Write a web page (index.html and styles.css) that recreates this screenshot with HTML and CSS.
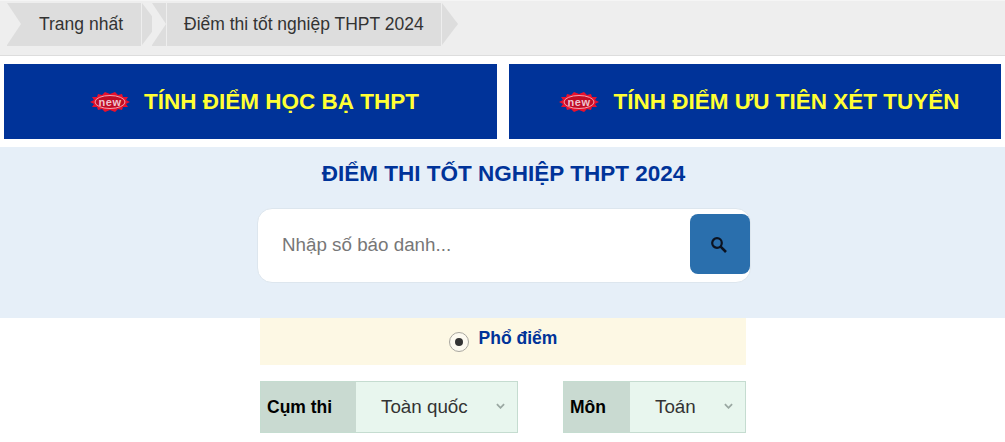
FILE: index.html
```html
<!DOCTYPE html>
<html lang="vi">
<head>
    <meta charset="UTF-8">
    <meta name="viewport" content="width=device-width, initial-scale=1.0">
    <title>Điểm thi tốt nghiệp THPT 2024</title>
    <link rel="stylesheet" href="styles.css">
</head>
<body>
    <div class="breadcrumb">
        <a href="#" class="crumb crumb-first">Trang nhất</a>
        <a href="#" class="crumb crumb-second">Điểm thi tốt nghiệp THPT 2024</a>
    </div>

    <div class="banners">
        <a href="#" class="banner">
            <svg class="new-icon" viewBox="0 0 40 20" width="40" height="20">
                <polygon fill="#e8102c" points="0,10 4,8 2,5 7,5 8,2 12,3 15,0 20,2 25,0 28,3 32,2 33,5 38,5 36,8 40,10 36,12 38,15 33,15 32,18 28,17 25,20 20,18 15,20 12,17 8,18 7,15 2,15 4,12"/>
                <ellipse cx="20" cy="10" rx="15" ry="6.5" fill="#c00c24" stroke="#f3a3b0" stroke-width="1"/>
                <text x="20" y="13.5" class="new-text">new</text>
            </svg>
            <span>TÍNH ĐIỂM HỌC BẠ THPT</span>
        </a>
        <a href="#" class="banner banner-second">
            <svg class="new-icon" viewBox="0 0 40 20" width="40" height="20">
                <polygon fill="#e8102c" points="0,10 4,8 2,5 7,5 8,2 12,3 15,0 20,2 25,0 28,3 32,2 33,5 38,5 36,8 40,10 36,12 38,15 33,15 32,18 28,17 25,20 20,18 15,20 12,17 8,18 7,15 2,15 4,12"/>
                <ellipse cx="20" cy="10" rx="15" ry="6.5" fill="#c00c24" stroke="#f3a3b0" stroke-width="1"/>
                <text x="20" y="13.5" class="new-text">new</text>
            </svg>
            <span>TÍNH ĐIỂM ƯU TIÊN XÉT TUYỂN</span>
        </a>
    </div>

    <div class="hero">
        <h1>ĐIỂM THI TỐT NGHIỆP THPT 2024</h1>
        <div class="search-box">
            <input type="text" class="search-input" placeholder="Nhập số báo danh...">
            <button class="search-btn" type="button">
                <svg viewBox="0 0 18 18" width="18" height="18">
                    <circle cx="7" cy="7" r="4.8" fill="none" stroke="#0b1220" stroke-width="2.2"/>
                    <path d="M10.6 10.6 L16 16" stroke="#0b1220" stroke-width="2.6"/>
                </svg>
            </button>
        </div>
    </div>

    <div class="content">
        <div class="radio-panel">
            <span class="radio"><span class="radio-dot"></span></span>
            <label class="radio-label">Phổ điểm</label>
        </div>
        <div class="filters">
            <div class="filter filter-cum">
                <div class="filter-label">Cụm thi</div>
                <div class="filter-value">
                    <span>Toàn quốc</span>
                    <svg class="caret" viewBox="0 0 10 6" width="9" height="6"><path d="M1 1 L5 5 L9 1" fill="none" stroke="#9aa8a2" stroke-width="2"/></svg>
                </div>
            </div>
            <div class="filter filter-mon">
                <div class="filter-label">Môn</div>
                <div class="filter-value">
                    <span>Toán</span>
                    <svg class="caret" viewBox="0 0 10 6" width="9" height="6"><path d="M1 1 L5 5 L9 1" fill="none" stroke="#9aa8a2" stroke-width="2"/></svg>
                </div>
            </div>
        </div>
    </div>
</body>
</html>
```

FILE: styles.css
```css
* {
    box-sizing: border-box;
    margin: 0;
    padding: 0;
}
html, body {
    height: 442px;
    overflow: hidden;
}
body {
    font-family: "Liberation Sans", Arial, sans-serif;
    background-color: #fff;
    color: #333;
}
.breadcrumb {
    display: flex;
    height: 56px;
    padding: 2px 0 0 7px;
    background-color: #eee;
    border-top: 1px solid #f5f5f5;
    border-bottom: 1px solid #ddd;
}
.crumb {
    position: relative;
    display: block;
    height: 43px;
    line-height: 42px;
    background-color: #ddd;
    color: #333;
    font-size: 17.5px;
    text-decoration: none;
}
.crumb-first {
    width: 134px;
    padding-left: 32px;
}
.crumb-second {
    width: 289px;
    margin-left: 11px;
    padding-left: 32px;
    background: linear-gradient(#eee, #eee) 14px 0 / 1px 100% no-repeat, #ddd;
}
/* notch on the left of each crumb */
.crumb::before {
    content: "";
    position: absolute;
    left: 0;
    top: 0;
    border-style: solid;
    border-width: 21.5px 0 21.5px 14px;
    border-color: transparent transparent transparent #eee;
}
/* arrow head, with a thin light line before it */
.crumb::after {
    content: "";
    position: absolute;
    left: 100%;
    top: 0;
    border-style: solid;
    border-width: 21.5px 0 21.5px 16px;
    border-color: transparent transparent transparent #ddd;
    margin-left: 1px;
}
.banners {
    display: flex;
    gap: 12px;
    padding: 8px 4px 0;
}
.banner {
    flex: 0 0 493px;
    display: flex;
    align-items: center;
    justify-content: center;
    gap: 14px;
    height: 75px;
    padding-left: 8px;
    background-color: #003399;
    color: #ffff33;
    font-size: 22.5px;
    font-weight: bold;
    text-decoration: none;
}
.banner-second {
    flex-basis: 492px;
    padding-left: 9px;
}
.new-icon {
    display: block;
}
.new-text {
    font-family: "Liberation Sans", Arial, sans-serif;
    font-size: 11px;
    font-weight: bold;
    letter-spacing: 0.6px;
    fill: #efc4d0;
    text-anchor: middle;
}
.hero {
    height: 171px;
    margin-top: 8px;
    padding: 14px 0 0 2px;
    background-color: #e6eff8;
}
.hero h1 {
    color: #003399;
    font-size: 22.5px;
    line-height: 26px;
    text-align: center;
}
.search-box {
    display: flex;
    align-items: flex-start;
    width: 494px;
    height: 75px;
    margin: 21px 0 0 255px;
    padding: 5px 0 0;
    background-color: #fff;
    border: 1px solid #dde6ee;
    border-radius: 15px;
}
.search-input {
    flex: 1;
    min-width: 0;
    height: 60px;
    padding: 2px 0 0 24px;
    border: none;
    outline: none;
    background: transparent;
    font-family: "Liberation Sans", Arial, sans-serif;
    font-size: 18.8px;
}
.search-input::placeholder {
    color: #777;
}
.search-btn {
    display: flex;
    align-items: center;
    justify-content: center;
    width: 60px;
    height: 60px;
    padding: 2px 2px 0 0;
    background-color: #2a6fad;
    border: none;
    border-radius: 8px;
}
.content {
    width: 486px;
    margin-left: 260px;
}
.radio-panel {
    display: flex;
    justify-content: center;
    gap: 10px;
    height: 47px;
    padding-top: 9px;
    background-color: #fdf8e4;
}
.radio {
    display: flex;
    align-items: center;
    justify-content: center;
    width: 20px;
    height: 20px;
    margin-top: 5px;
    background-color: #fdfaf0;
    border: 1px solid #a9a79f;
    border-radius: 50%;
}
.radio-dot {
    width: 8px;
    height: 8px;
    background-color: #333;
    border-radius: 50%;
}
.radio-label {
    color: #003399;
    font-size: 17.5px;
    font-weight: bold;
    line-height: 22px;
}
.filters {
    display: flex;
    justify-content: space-between;
    margin-top: 16px;
}
.filter {
    display: flex;
    height: 52px;
    border: 1px solid #c5dcd0;
}
.filter-cum {
    width: 258px;
}
.filter-mon {
    width: 183px;
}
.filter-label {
    display: flex;
    align-items: center;
    padding-left: 6px;
    background-color: #c9dad1;
    color: #000;
    font-size: 17.5px;
    font-weight: bold;
}
.filter-cum .filter-label {
    width: 95px;
}
.filter-mon .filter-label {
    width: 66px;
}
.filter-value {
    flex: 1;
    display: flex;
    align-items: center;
    justify-content: space-between;
    padding: 0 13px 0 25px;
    background-color: #e8f6ee;
    color: #333;
    font-size: 18.8px;
}
.caret {
    margin: 0 -1px 2px 0;
}
```
